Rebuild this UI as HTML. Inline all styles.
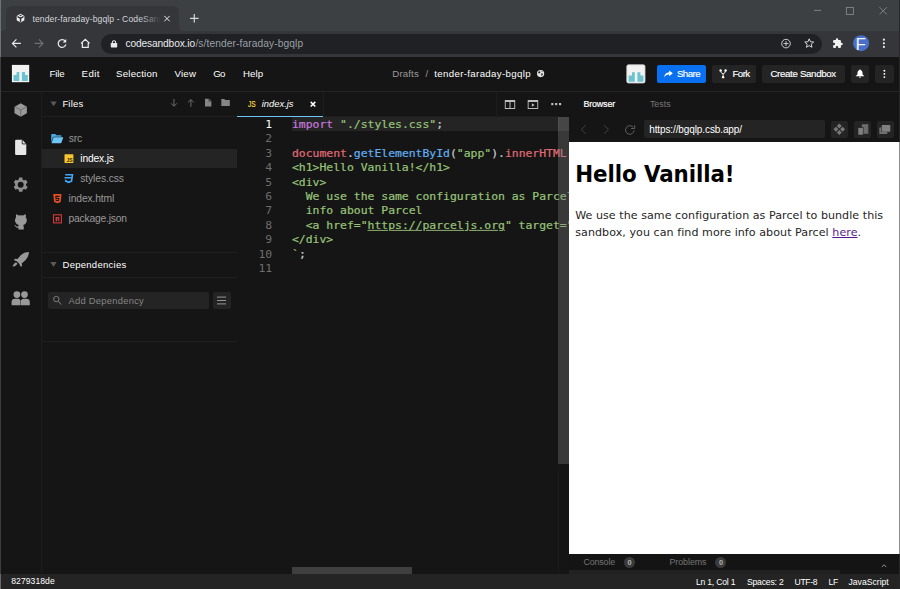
<!DOCTYPE html>
<html lang="en">
<head>
<meta charset="utf-8">
<title>tender-faraday-bgqlp - CodeSandbox</title>
<style>
*{box-sizing:border-box;margin:0;padding:0}
html,body{width:900px;height:589px;overflow:hidden;background:#151515}
body{position:relative;font-family:"Liberation Sans",sans-serif;color:#fff}
.abs{position:absolute}
.t{position:absolute;white-space:nowrap;line-height:1}
svg{position:absolute;overflow:visible}

/* ---------- browser chrome ---------- */
#tabstrip{left:0;top:0;width:900px;height:31px;background:#3c4043}
#topline{left:0;top:0;width:900px;height:1px;background:#2b2d30}
#tab{left:6.3px;top:6px;width:172.5px;height:25px;background:#35363a;border-radius:6px 6px 0 0}
#tabtitle{left:32.4px;top:12px;width:128px;height:14px;overflow:hidden;font-size:8.6px;color:#d3d5d9;white-space:nowrap;line-height:14px;letter-spacing:0.1px}
#tabfade{left:140px;top:12px;width:21px;height:14px;background:linear-gradient(90deg,rgba(53,54,58,0),#35363a)}
#toolbar{left:0;top:31px;width:900px;height:26px;background:#35363a}
#omni{left:101px;top:34px;width:721px;height:19.6px;border-radius:10px;background:#202124}
#avatar{left:853px;top:35.3px;width:16.2px;height:16px;border-radius:50%;background:#486fc9}
#winL{left:0;top:0;width:1px;height:57px;background:#707173}
#winL2{left:0;top:57px;width:1px;height:517px;background:#3e3e3e}
#winL3{left:0;top:574px;width:1px;height:15px;background:#6a6a6a}
#winR{left:899px;top:0;width:1px;height:589px;background:#272727}

/* ---------- csb header ---------- */
#hdr{left:1px;top:57px;width:899px;height:34px;background:#151515}
#hdrline{left:1px;top:91px;width:899px;height:1px;background:#242424}
.btn{top:64.6px;height:18.6px;background:#242424;border-radius:2px}

/* ---------- activity bar / sidebar ---------- */
#actline{left:41px;top:92px;width:1px;height:481px;background:#1e1e1e}
.hline{left:42px;width:195px;height:1px;background:#202020}
#selrow{left:42px;top:149px;width:195px;height:19px;background:#242424}
#dep{left:47.6px;top:292px;width:161.4px;height:16.8px;background:#242424;border-radius:2px}
#depbtn{left:212.8px;top:292px;width:17.8px;height:16.8px;background:#242424;border-radius:2px}

/* ---------- editor ---------- */
#edtabline{left:237px;top:116px;width:86px;height:1px;background:#6cc7f6}
#edtabsep{left:323px;top:92px;width:1px;height:24px;background:#1e1e1e}
#edtabsep2{left:495.8px;top:92px;width:1px;height:24px;background:#1c1c1c}
#curline{left:292px;top:117px;width:266.6px;height:14px;background:#242424}
#curline0{left:323px;top:116px;width:235.6px;height:1px;background:#1d1d1d}
#code{left:237px;top:117px;width:332px;height:170px;overflow:hidden;font-family:"DejaVu Sans Mono","Liberation Mono",monospace;font-size:11.42px}
#code div{position:absolute;white-space:pre;line-height:14.4px;height:14.4px;transform:scaleY(0.9);transform-origin:0 11px}
#code .n{left:0;width:35.2px;text-align:right;color:#6d6d6d}
#code .l{left:55px;-webkit-text-stroke:0.22px currentColor}
.k{color:#c678dd}.s{color:#98c379}.r{color:#e06c75}.f{color:#61afef}.p{color:#c8ccd4}
.u{text-decoration:underline}
#vscroll{left:558.4px;top:116.6px;width:10.2px;height:347.4px;background:rgba(121,121,121,.36)}
#vscroll2{left:558.4px;top:116.6px;width:10.2px;height:14.4px;background:rgba(160,160,160,.13)}
#hscroll{left:291.5px;top:567px;width:120.5px;height:7px;background:#3f3f3f}

/* ---------- preview ---------- */
#urlbox{left:643.6px;top:120.4px;width:181.4px;height:17.6px;background:#242424;border-radius:2px}
.pbtn{top:121px;width:17.4px;height:17px;background:#242424;border-radius:2px}
#page{left:569px;top:142px;width:330px;height:412px;background:#fff}
#pageR{left:899px;top:142px;width:1px;height:412px;background:#8c8c8c}
#conbar{left:569px;top:554px;width:331px;height:16px;background:#141414}
#constrip{left:569px;top:570px;width:271px;height:4px;background:#222}
#edR{left:558.4px;top:465px;width:1px;height:108px;background:#1b1b1b}
.badge{top:556.6px;width:11px;height:11px;border-radius:50%;background:#3a3a3a}

/* ---------- status ---------- */
#status{left:0;top:574px;width:900px;height:15px;background:#242424}
</style>
</head>
<body>
<!-- browser chrome -->
<div class="abs" id="tabstrip"></div>
<div class="abs" id="tab"></div>
<svg style="left:2px;top:26px" width="182" height="5" viewBox="0 0 182 5"><path d="M0 5 Q5 5 5 0 L5 5Z M182 5 Q177 5 177 0 L177 5Z" fill="#35363a"/></svg>
<div class="abs" id="tabtitle">tender-faraday-bgqlp - CodeSandbox</div>
<div class="abs" id="tabfade"></div>
<div class="abs" id="toolbar"></div>
<div class="abs" id="omni"></div>
<svg style="left:853px;top:35px" width="16.2" height="16" viewBox="0 0 16.2 16"><g transform="translate(0.000 0.200)"><ellipse cx="8.100" cy="8" rx="8.100" ry="8" fill="#486fc9"/></g></svg>
<!--ICONS_CHROME_START-->
<!-- favicon cube -->
<svg style="left:16px;top:13px" width="7.7" height="8.9" viewBox="0 0 16 18"><g transform="translate(1.455 1.416)"><path d="M8 0 L16 4.500 V13.500 L8 18 L0 13.500 V4.500 Z" fill="#f1f3f4"/><path d="M8 9.500 V15.400 M8 9.500 L2.800 6.500 M8 9.500 L13.200 6.500" fill="none" stroke="#35363a" stroke-width="3.200" stroke-linecap="round"/><path d="M5 3.600 L8 2 L11 3.600 L8 5.200Z" fill="#35363a"/></g></svg>
<!-- tab close -->
<svg style="left:164px;top:15px" width="6" height="6" viewBox="0 0 6 6"><g transform="translate(0.000 0.600)"><path d="M0.3 0.3 L5.7 5.7 M5.7 0.3 L0.3 5.7" stroke="#e8eaed" stroke-width="1"/></g></svg>
<!-- new tab -->
<svg style="left:190px;top:14px" width="8.6" height="8.6" viewBox="0 0 8.6 8.6"><path d="M4.3 0 V8.6 M0 4.3 H8.6" stroke="#d5d7da" stroke-width="1.2"/></svg>
<!-- window controls -->
<svg style="left:814px;top:7px" width="74" height="8" viewBox="0 0 74 8"><path d="M0 3.4 H7" stroke="#85888c" stroke-width="0.9" fill="none"/><rect x="32.4" y="0.4" width="7" height="7" fill="none" stroke="#85888c" stroke-width="0.9"/><path d="M65.6 0.2 L72.8 7.4 M72.8 0.2 L65.6 7.4" stroke="#85888c" stroke-width="0.9"/></svg>
<!-- back -->
<svg style="left:11px;top:38px" width="9.6" height="9.6" viewBox="0 0 16 16"><g transform="translate(1.000 1.000)"><path d="M15.5 8 H2 M8 1.4 L1.4 8 L8 14.6" fill="none" stroke="#e8eaed" stroke-width="2"/></g></svg>
<!-- forward -->
<svg style="left:34px;top:38px" width="9.6" height="9.6" viewBox="0 0 16 16"><g transform="translate(0.333 1.000)"><path d="M0.5 8 H14 M8 1.4 L14.6 8 L8 14.6" fill="none" stroke="#6e7073" stroke-width="2"/></g></svg>
<!-- reload -->
<svg style="left:57px;top:38px" width="10" height="10" viewBox="0 0 16 16"><g transform="translate(0.000 0.640)"><path d="M13.2 4.6 A6.2 6.2 0 1 0 14.2 9.6" fill="none" stroke="#e8eaed" stroke-width="2"/><path d="M14.8 0.8 V6.6 H9 Z" fill="#e8eaed"/></g></svg>
<!-- home -->
<svg style="left:80px;top:38px" width="9.8" height="9.8" viewBox="0 0 16 16"><g transform="translate(0.653 0.653)"><path d="M1 8.2 L8 1.6 L15 8.2 M3.2 7 V14.6 H12.8 V7" fill="none" stroke="#e8eaed" stroke-width="2" stroke-linejoin="miter"/></g></svg>
<!-- lock -->
<svg style="left:110px;top:40px" width="6.4" height="7.2" viewBox="0 0 10 13" preserveAspectRatio="none"><g transform="translate(1.250 0.361)"><rect x="0" y="5" width="10" height="8" rx="1" fill="#e8eaed"/><path d="M2.4 5.4 V3.6 A2.6 2.6 0 0 1 7.6 3.6 V5.4" fill="none" stroke="#e8eaed" stroke-width="1.6"/></g></svg>
<!-- zoom -->
<svg style="left:781px;top:38px" width="10" height="10" viewBox="0 0 10 10"><g transform="translate(0.000 0.600)"><circle cx="5" cy="5" r="4.3" fill="none" stroke="#d5d7da" stroke-width="0.95"/><path d="M5 2.500 V7.500 M2.500 5 H7.500" stroke="#d5d7da" stroke-width="0.900"/></g></svg>
<!-- star -->
<svg style="left:804px;top:38px" width="10.4" height="10" viewBox="0 0 24 23"><path d="M12 1.8 L14.9 8.6 L22.3 9.3 L16.7 14.2 L18.4 21.4 L12 17.6 L5.6 21.4 L7.3 14.2 L1.7 9.3 L9.1 8.6 Z" fill="none" stroke="#d5d7da" stroke-width="2.3" stroke-linejoin="miter"/></svg>
<!-- extensions puzzle -->
<svg style="left:832px;top:37px" width="11" height="11" viewBox="0 0 24 24"><g transform="translate(0.436 1.745)"><path d="M20.5 11H19V7a2 2 0 0 0-2-2h-4V3.5a2.5 2.5 0 0 0-5 0V5H4a2 2 0 0 0-2 2v3.8h1.5a2.7 2.7 0 0 1 0 5.400H2V20a2 2 0 0 0 2 2h3.800v-1.500a2.700 2.700 0 0 1 5.400 0V22H17a2 2 0 0 0 2-2v-4h1.500a2.500 2.500 0 0 0 0-5z" fill="#f1f3f4"/></g></svg>
<!-- menu dots -->
<svg style="left:882px;top:38px" width="2.6" height="10.2" viewBox="0 0 2.6 10.2"><g transform="translate(0.600 0.500)"><circle cx="1.3" cy="1.2" r="1.1" fill="#e8eaed"/><circle cx="1.3" cy="4.8" r="1.1" fill="#e8eaed"/><circle cx="1.3" cy="8.4" r="1.1" fill="#e8eaed"/></g></svg>
<!--ICONS_CHROME_END-->

<!-- codesandbox header -->
<div class="abs" id="hdr"></div>
<div class="abs" id="hdrline"></div>
<div class="abs btn" style="left:657px;width:49px;background:#0971f1"></div>
<div class="abs btn" style="left:712px;width:44px"></div>
<div class="abs btn" style="left:761.6px;width:83.4px"></div>
<div class="abs btn" style="left:851px;width:18px"></div>
<div class="abs btn" style="left:875px;width:19px"></div>
<!--ICONS_HDR_START-->
<!-- csb logo / workspace avatar -->
<svg style="left:11px;top:64px" width="17.3" height="17.3" viewBox="0 0 17.3 17.3"><g transform="translate(0.900 0.900)"><rect width="17.3" height="17.3" fill="#f2f2f2"/><path d="M1.6 16 V10.2 H4.7 V7.2 H7.4 V16 Z M10 16 V7.2 H13.1 V10.2 H15.9 V16 Z" fill="#6cc3cf"/></g></svg>
<!-- globe -->
<svg style="left:537px;top:70px" width="7.2" height="7.2" viewBox="0 0 14 14"><circle cx="7" cy="7" r="7" fill="#e6e6e6"/><path d="M3 3.200 Q5 2 6.500 3.200 Q7 5 5.200 5.600 Q4.500 7.500 3 6.500 Q2 5 3 3.200Z M8.500 6.500 Q11 6 11.500 8 Q11 10.500 9 11.500 Q8 10 8.500 8.500Z M8.600 2 Q10.500 2.200 11.200 3.800 Q9.500 4.200 8.600 2Z" fill="#151515"/></svg>
<!-- user avatar -->
<svg style="left:626px;top:64px" width="19" height="19" viewBox="0 0 19 19"><g transform="translate(0.400 0.400)"><rect x="0.4" y="0.4" width="18.2" height="18.2" rx="1.6" fill="#f2f2f2" stroke="#cfcfcf" stroke-width="0.8"/><path d="M2.200 17.300 V11 H5.600 V7.800 H8.400 V17.300 Z M11 17.300 V7.800 H14 V11 H17 V17.300 Z" fill="#6cc3cf"/></g></svg>
<!-- share arrow -->
<svg style="left:664px;top:70px" width="8.8" height="7.2" viewBox="0 0 22 18"><g transform="translate(0.000 1.000)"><path d="M13 0 L22 7.200 L13 14.400 V10 Q5 9.500 0 18 Q1.500 5.500 13 4.600 Z" fill="#fff"/></g></svg>
<!-- fork -->
<svg style="left:719px;top:69px" width="7.4" height="9.2" viewBox="0 0 15 18.5"><g transform="translate(0.811 0.402)"><path d="M2.400 2.400 Q2.800 8.500 7.500 9.500 Q12.200 8.500 12.600 2.400 M7.500 9.500 V16" fill="none" stroke="#fff" stroke-width="1.900"/><circle cx="2.400" cy="2.400" r="2.400" fill="#fff"/><circle cx="12.600" cy="2.400" r="2.400" fill="#fff"/><circle cx="7.500" cy="16.100" r="2.400" fill="#fff"/></g></svg>
<!-- bell -->
<svg style="left:855px;top:69px" width="8.8" height="8.6" viewBox="0 0 18 17.5"><g transform="translate(1.227 0.610)"><path d="M9 0 Q10.200 0 10.200 1.300 Q14.200 2.400 14.200 7 V10.500 L17.600 13.600 V14.400 H0.400 V13.600 L3.800 10.500 V7 Q3.800 2.400 7.800 1.300 Q7.800 0 9 0Z M6.800 15.400 H11.200 Q10.800 17.400 9 17.400 Q7.200 17.400 6.800 15.400Z" fill="#fff"/></g></svg>
<!-- header dots -->
<svg style="left:883px;top:69px" width="2.2" height="8.8" viewBox="0 0 2.2 8.8"><g transform="translate(0.300 0.600)"><circle cx="1.100" cy="1.100" r="0.950" fill="#fff"/><circle cx="1.100" cy="4.300" r="0.950" fill="#fff"/><circle cx="1.100" cy="7.500" r="0.950" fill="#fff"/></g></svg>
<!--ICONS_HDR_END-->

<!-- activity bar + sidebar -->
<div class="abs" id="actline"></div>
<div class="abs hline" style="top:116px"></div>
<div class="abs hline" style="top:252px"></div>
<div class="abs hline" style="top:277px"></div>
<div class="abs hline" style="top:341px"></div>
<div class="abs" id="selrow"></div>
<div class="abs" id="dep"></div>
<div class="abs" id="depbtn"></div>
<!--ICONS_SIDE_START-->
<!-- activity: cube -->
<svg style="left:14px;top:103px" width="12.4" height="13.4" viewBox="0 0 24 26"><g transform="translate(0.968 0.582)"><path d="M12 0 L24 6.500 V19.500 L12 26 L0 19.500 V6.500 Z" fill="#999"/><path d="M0.800 7 L12 13 L23.200 7 M12 13 V25.400" fill="none" stroke="#5e5e5e" stroke-width="1.400"/></g></svg>
<!-- activity: file (active) -->
<svg style="left:15px;top:139px" width="11.2" height="15.4" viewBox="0 0 22 30"><g transform="translate(0.196 1.558)"><path d="M2 0 H14 L22 8 V28 Q22 30 20 30 H2 Q0 30 0 28 V2 Q0 0 2 0Z" fill="#e6e6e6"/><path d="M14 0 V8 H22" fill="none" stroke="#151515" stroke-width="1.600"/></g></svg>
<!-- activity: gear -->
<svg style="left:13px;top:177px" width="15" height="15" viewBox="0 0 24 24"><g transform="translate(0.320 0.320)"><path d="M19.430 12.980c.04-.32.070-.64.070-.98s-.030-.66-.070-.98l2.110-1.650c.19-.15.240-.42.120-.64l-2-3.460c-.12-.22-.39-.3-.61-.22l-2.490 1c-.52-.4-1.080-.73-1.690-.98l-.38-2.650A.488.488 0 0 0 14 2h-4c-.25 0-.46.180-.49.420l-.38 2.650c-.61.250-1.170.59-1.690.98l-2.490-1c-.23-.09-.49 0-.61.220l-2 3.460c-.13.220-.07.490.12.640l2.110 1.650c-.4.320-.7.650-.7.980s.3.660.7.980l-2.110 1.650c-.19.150-.24.420-.12.640l2 3.460c.12.220.39.300.61.220l2.490-1c.52.400 1.080.730 1.690.98l.38 2.650c.3.240.24.420.49.420h4c.25 0 .46-.18.490-.42l.38-2.650c.61-.25 1.170-.59 1.690-.98l2.490 1c.23.090.49 0 .61-.22l2-3.460c.12-.22.070-.49-.12-.64l-2.110-1.650zM12 16.200a4.200 4.200 0 1 1 0-8.400 4.200 4.200 0 0 1 0 8.400z" fill="#8e8e8e" transform="translate(-1.600 -1.600) scale(1.133)"/></g></svg>
<!-- activity: github -->
<svg style="left:14px;top:213px" width="13.8" height="16.4" viewBox="0 0 28 33"><g transform="translate(0.000 0.805)"><path d="M4.500 1.500 Q7.500 2 9.500 4 Q14 3 18.500 4 Q20.500 2 23.500 1.500 Q24.800 5 23.800 7.500 Q26.500 10.500 26 15 Q25 22 18.500 23.500 Q19.800 25 19.800 27.500 V32.500 H9 V29 Q4.500 30 3 26.500 Q2.200 24.500 0.500 23.800 Q1.800 22.800 3.500 24.200 Q5.500 27.500 9 26.200 Q9.200 24.500 10 23.500 Q3 22 2 15 Q1.500 10.500 4.200 7.500 Q3.200 5 4.500 1.500Z" fill="#999"/></g></svg>
<!-- activity: rocket -->
<svg style="left:12px;top:251px" width="16.8" height="15.6" viewBox="0 0 34 31"><g transform="translate(0.607 1.192)"><path d="M33.500 0.500 Q34 9 27 16.500 L19 24 L20 29 L17 30.500 L14 24.500 L9 19.500 L3.500 17 L5 14 L10.500 14.500 L17.500 6.500 Q24.500 0 33.500 0.500Z" fill="#999"/><path d="M7.500 21.500 L10.500 24.500 Q7 30 0.500 30.500 Q1.500 24.500 7.500 21.500Z" fill="#999"/></g></svg>
<!-- activity: people -->
<svg style="left:11px;top:291px" width="18.2" height="14.2" viewBox="0 0 36 28"><g transform="translate(1.187 0.000)"><circle cx="10.500" cy="7" r="6.600" fill="#999"/><circle cx="25.500" cy="7" r="6.600" fill="#999"/><path d="M0 28 V22 Q0 15.500 7 15.500 H13 Q17 15.500 17.600 19.500 V28Z" fill="#999"/><path d="M18.400 28 V21 Q18.400 15.500 24 15.500 H29 Q36 15.500 36 22 V28Z" fill="#999"/></g></svg>

<!-- sidebar: collapse triangles -->
<svg style="left:50px;top:101px" width="6.4" height="4.8" viewBox="0 0 5.8 4.4"><g transform="translate(0.362 0.458)"><path d="M0 0 H5.800 L2.900 4.400Z" fill="#5a5a5a"/></g></svg>
<svg style="left:50px;top:262px" width="6.4" height="4.8" viewBox="0 0 5.8 4.4"><g transform="translate(0.272 0.092)"><path d="M0 0 H5.800 L2.900 4.400Z" fill="#5a5a5a"/></g></svg>
<!-- sidebar header actions -->
<svg style="left:170px;top:99px" width="6.4" height="7.8" viewBox="0 0 6.4 7.8"><g transform="translate(0.800 0.000)"><path d="M3.200 0 V7.200 M0.300 4.300 L3.200 7.200 L6.100 4.300" fill="none" stroke="#757575" stroke-width="0.900"/></g></svg>
<svg style="left:187px;top:99px" width="6.4" height="7.8" viewBox="0 0 6.4 7.8"><g transform="translate(0.700 0.000)"><path d="M3.200 7.800 V0.600 M0.300 3.500 L3.200 0.600 L6.100 3.500" fill="none" stroke="#757575" stroke-width="0.900"/></g></svg>
<svg style="left:205px;top:98px" width="6.4" height="7.7" viewBox="0 0 12.8 15.4"><g transform="translate(0.000 1.400)"><path d="M0 0 H8 L12.800 4.800 V15.400 H0Z" fill="#858585"/><path d="M8 0 V4.800 H12.800" fill="none" stroke="#151515" stroke-width="1.200"/></g></svg>
<svg style="left:221px;top:99px" width="8.5" height="6.9" viewBox="0 0 18.4 13.8" preserveAspectRatio="none"><g transform="translate(0.649 0.000)"><path d="M0 0 H6.500 L8.500 2 H18.400 V13.800 H0Z" fill="#858585"/></g></svg>
<!-- folder open -->
<svg style="left:51px;top:134px" width="12" height="9.2" viewBox="0 0 24 18.4"><g transform="translate(0.400 0.000)"><path d="M0 1.500 Q0 0 1.500 0 H8 L10.500 2.600 H19 Q20.500 2.600 20.500 4 V5.600 H5.500 Q4 5.600 3.500 7 L0 16.500Z" fill="#4aa8e0"/><path d="M5.800 6.600 H23 Q24.300 6.600 23.800 8 L20.500 17.200 Q20.100 18.400 18.800 18.400 H1.200 Q0.400 18.400 0.800 17.400 L4.200 7.800 Q4.600 6.600 5.800 6.600Z" fill="#6cc7f6"/></g></svg>
<!-- js file icon -->
<svg style="left:64px;top:154px" width="8.9" height="8.9" viewBox="0 0 18 18"><g transform="translate(1.011 0.404)"><rect width="18" height="18" rx="1" fill="#f8c630"/><text x="16.600" y="15.800" text-anchor="end" font-family="Liberation Sans,sans-serif" font-weight="bold" font-size="10.400" fill="#3a2e00">JS</text></g></svg>
<!-- css file icon -->
<svg style="left:64px;top:174px" width="9" height="9.2" viewBox="0 0 18 18.4"><g transform="translate(0.800 0.000)"><path d="M1.500 0 H18 L15.800 15.400 L8.500 18.400 L1.200 15.400 L0.700 11.400 H4.200 L4.400 13 L8.500 14.700 L12.800 13 L13.400 9 H0.300 L0 6 H13.900 L14.300 3 H1.800Z" fill="#42a5f5"/></g></svg>
<!-- html5 file icon -->
<svg style="left:53px;top:194px" width="8.2" height="9.2" viewBox="0 0 16.4 18.4"><g transform="translate(0.600 0.000)"><path d="M0 0 H16.400 L14.900 16.200 L8.200 18.400 L1.500 16.200Z" fill="#e44f26"/><path d="M4 3.600 H12.600 L12.400 5.800 H6.300 L6.500 7.800 H12.200 L11.700 13.300 L8.200 14.400 L4.700 13.300 L4.500 10.800 H6.600 L6.700 11.800 L8.200 12.200 L9.700 11.800 L9.900 9.900 H4.500Z" fill="#151515"/></g></svg>
<!-- npm icon -->
<svg style="left:53px;top:214px" width="8.9" height="9.1" viewBox="0 0 17.8 18.2"><g transform="translate(0.000 0.600)"><rect x="1" y="1" width="15.800" height="16.200" fill="none" stroke="#d13b3b" stroke-width="2.200"/><path d="M5.200 14 V5.400 H12.600 V14 H10.200 V7.800 H8.600 V14Z" fill="#d13b3b"/></g></svg>
<!-- search icon -->
<svg style="left:53px;top:295px" width="8.6" height="9.2" viewBox="0 0 17.2 18.4"><g transform="translate(0.000 1.600)"><circle cx="6.600" cy="6.600" r="5.400" fill="none" stroke="#8a8a8a" stroke-width="1.700"/><path d="M10.600 10.800 L16.400 17.600" stroke="#8a8a8a" stroke-width="1.900"/></g></svg>
<!-- hamburger -->
<svg style="left:217px;top:296px" width="9" height="8" viewBox="0 0 9 8"><g transform="translate(0.000 0.500)"><path d="M0 0.600 H9 M0 4 H9 M0 7.400 H9" stroke="#9c9c9c" stroke-width="0.950"/></g></svg>
<!--ICONS_SIDE_END-->

<!-- editor -->
<div class="abs" id="edtabsep"></div>
<div class="abs" id="edtabsep2"></div>
<div class="abs" id="edtabline"></div>
<div class="abs" id="curline"></div>
<div class="abs" id="curline0"></div>
<div class="abs" id="code">
<div class="n" style="top:0px;color:#fff">1</div><div class="l" style="top:0px"><span class="k">import</span> <span class="s">"./styles.css"</span><span class="p">;</span></div>
<div class="n" style="top:14.4px">2</div>
<div class="n" style="top:28.8px">3</div><div class="l" style="top:28.8px"><span class="r">document</span><span class="p">.</span><span class="f">getElementById</span><span class="p">(</span><span class="s">"app"</span><span class="p">).</span><span class="r">innerHTML</span><span class="p"> = </span><span class="s">`</span></div>
<div class="n" style="top:43.2px">4</div><div class="l s" style="top:43.2px">&lt;h1&gt;Hello Vanilla!&lt;/h1&gt;</div>
<div class="n" style="top:57.6px">5</div><div class="l s" style="top:57.6px">&lt;div&gt;</div>
<div class="n" style="top:72px">6</div><div class="l s" style="top:72px">  We use the same configuration as Parcel to bundle this sandbox, you can find more</div>
<div class="n" style="top:86.4px">7</div><div class="l s" style="top:86.4px">  info about Parcel</div>
<div class="n" style="top:100.8px">8</div><div class="l s" style="top:100.8px">  &lt;a hre<span>f</span>="<span class="u">https://parceljs.org</span>" target="_blank" rel="noopener noreferrer"&gt;here&lt;/a&gt;.</div>
<div class="n" style="top:115.2px">9</div><div class="l s" style="top:115.2px">&lt;/div&gt;</div>
<div class="n" style="top:129.6px">10</div><div class="l" style="top:129.6px"><span class="s">`</span><span class="p">;</span></div>
<div class="n" style="top:144px">11</div>
</div>
<div class="abs" id="vscroll"></div>
<div class="abs" id="vscroll2"></div>
<div class="abs" id="hscroll"></div>
<div class="abs" id="edR"></div>
<!--ICONS_ED_START-->
<!-- editor tab close -->
<svg style="left:310px;top:101px" width="5.6" height="5.6" viewBox="0 0 5.6 5.6"><g transform="translate(0.200 0.400)"><path d="M0.500 0.500 L5.100 5.100 M5.100 0.500 L0.500 5.100" stroke="#fff" stroke-width="1.500"/></g></svg>
<!-- split editor -->
<svg style="left:504px;top:100px" width="10.4" height="9" viewBox="0 0 10.4 9"><g transform="translate(0.800 0.000)"><path d="M0 0 H10.400 V9 H0Z M0.900 2 V8.100 H4.700 V2Z M5.700 2 V8.100 H9.500 V2Z" fill="#bdbdbd" fill-rule="evenodd"/></g></svg>
<!-- open preview -->
<svg style="left:527px;top:100px" width="10.5" height="9" viewBox="0 0 10.5 9"><g transform="translate(0.700 0.000)"><path d="M0 0 H10.500 V9 H0Z M0.900 2 V8.100 H9.600 V2Z" fill="#bdbdbd" fill-rule="evenodd"/><path d="M4.200 3.300 L6.900 5 L4.200 6.700Z" fill="#bdbdbd"/></g></svg>
<!-- more dots -->
<svg style="left:551px;top:103px" width="10" height="2.2" viewBox="0 0 10 2.2"><g transform="translate(0.200 0.000)"><rect x="0" y="0" width="2.200" height="2.200" fill="#bdbdbd"/><rect x="3.900" y="0" width="2.200" height="2.200" fill="#bdbdbd"/><rect x="7.800" y="0" width="2.200" height="2.200" fill="#bdbdbd"/></g></svg>
<!--ICONS_ED_END-->

<!-- preview -->
<div class="abs" id="urlbox"></div>
<div class="abs pbtn" style="left:831px"></div>
<div class="abs pbtn" style="left:854px"></div>
<div class="abs pbtn" style="left:877px"></div>
<div class="abs" id="page"></div>
<div class="abs" id="conbar"></div>
<div class="abs" id="constrip"></div>
<div class="abs badge" style="left:624px"></div>
<div class="abs badge" style="left:715.4px"></div>
<!--ICONS_PV_START-->
<!-- nav back / forward (disabled) -->
<svg style="left:580px;top:125px" width="5.2" height="9" viewBox="0 0 5.2 9"><g transform="translate(0.800 0.000)"><path d="M4.900 0.300 L0.500 4.500 L4.900 8.700" fill="none" stroke="#4d4d4d" stroke-width="0.800"/></g></svg>
<svg style="left:603px;top:125px" width="5.2" height="9" viewBox="0 0 5.2 9"><g transform="translate(0.800 0.000)"><path d="M0.300 0.300 L4.700 4.500 L0.300 8.700" fill="none" stroke="#4d4d4d" stroke-width="0.800"/></g></svg>
<!-- refresh -->
<svg style="left:624px;top:124px" width="10.4" height="9.6" viewBox="0 0 10.4 9.6"><g transform="translate(0.800 0.800)"><path d="M8.300 2.400 A4.300 4.300 0 1 0 9.300 5.600" fill="none" stroke="#6e6e6e" stroke-width="0.850"/><path d="M9.900 0.300 V3.700 H6.300" fill="none" stroke="#6e6e6e" stroke-width="0.850"/></g></svg>
<!-- preview action icons -->
<svg style="left:833px;top:123px" width="11.6" height="11.6" viewBox="0 0 11.6 11.6"><g transform="translate(0.500 0.500)"><path d="M5.800 0 L8.300 2.500 L5.800 5 L3.300 2.500Z M5.800 6.600 L8.300 9.100 L5.800 11.600 L3.300 9.100Z M2.500 3.300 L5 5.800 L2.500 8.300 L0 5.800Z M9.100 3.300 L11.600 5.800 L9.100 8.300 L6.600 5.800Z" fill="#787878"/></g></svg>
<svg style="left:858px;top:124px" width="10.3" height="10.8" viewBox="0 0 10.3 10.8"><g transform="translate(0.000 0.200)"><rect x="3.800" y="0" width="6.500" height="9.600" fill="#6c6c6c"/><rect x="0" y="3.500" width="5.200" height="7.300" fill="#808080" stroke="#242424" stroke-width="0.600"/></g></svg>
<svg style="left:879px;top:125px" width="11" height="8.9" viewBox="0 0 11 8.9"><g transform="translate(0.300 0.100)"><rect x="0" y="2.300" width="8" height="6.600" rx="0.600" fill="#707070"/><rect x="1.900" y="-0.400" width="9.500" height="7.400" rx="0.600" fill="#242424"/><rect x="2.400" y="0" width="8.600" height="6.600" rx="0.600" fill="#808080"/></g></svg>
<!-- console chevron -->
<svg style="left:881px;top:564px" width="5" height="3.4" viewBox="0 0 5 3.4"><g transform="translate(0.600 0.000)"><path d="M0.300 3.100 L2.500 0.700 L4.700 3.100" fill="none" stroke="#9a9a9a" stroke-width="0.900"/></g></svg>
<!--ICONS_PV_END-->

<!-- status bar -->
<div class="abs" id="status"></div>

<div class="t" style="left:125.6px;top:39px;font-size:10.2px;color:#e8eaed;letter-spacing:-0.144px;">codesandbox.io</div>
<div class="t" style="left:195.4px;top:39px;font-size:10.2px;color:#9aa0a6;letter-spacing:0.107px;">/s/tender-faraday-bgqlp</div>
<div class="t" style="left:855.5px;top:36px;font-size:17px;color:#f3f5fc;">F</div>
<div class="t" style="left:49.4px;top:69px;font-size:9.7px;color:#ffffff;letter-spacing:-0.111px;">File</div>
<div class="t" style="left:81.6px;top:69px;font-size:9.7px;color:#ffffff;letter-spacing:0.396px;">Edit</div>
<div class="t" style="left:116.1px;top:69px;font-size:9.7px;color:#ffffff;letter-spacing:0.179px;">Selection</div>
<div class="t" style="left:174.4px;top:69px;font-size:9.7px;color:#ffffff;letter-spacing:0.254px;">View</div>
<div class="t" style="left:213.2px;top:69px;font-size:9.7px;color:#ffffff;letter-spacing:-0.646px;">Go</div>
<div class="t" style="left:242.9px;top:69px;font-size:9.7px;color:#ffffff;letter-spacing:0.118px;">Help</div>
<div class="t" style="left:392.3px;top:69px;font-size:9.7px;color:#999999;letter-spacing:0.129px;">Drafts</div>
<div class="t" style="left:425.6px;top:69px;font-size:9.7px;color:#999999;">/</div>
<div class="t" style="left:434.3px;top:69px;font-size:9.7px;color:#ffffff;letter-spacing:0.334px;">tender-faraday-bgqlp</div>
<div class="t" style="left:676.9px;top:69px;font-size:9.7px;color:#ffffff;letter-spacing:-0.542px;-webkit-text-stroke:0.15px currentColor;">Share</div>
<div class="t" style="left:732.5px;top:69px;font-size:9.7px;color:#ffffff;letter-spacing:-0.561px;-webkit-text-stroke:0.15px currentColor;">Fork</div>
<div class="t" style="left:770.4px;top:69px;font-size:9.7px;color:#ffffff;letter-spacing:-0.325px;-webkit-text-stroke:0.15px currentColor;">Create Sandbox</div>
<div class="t" style="left:62.4px;top:99px;font-size:9.5px;color:#ffffff;letter-spacing:0.181px;">Files</div>
<div class="t" style="left:68.8px;top:134px;font-size:10.3px;color:#999999;letter-spacing:-0.213px;">src</div>
<div class="t" style="left:80.3px;top:154px;font-size:10.3px;color:#ffffff;letter-spacing:-0.188px;">index.js</div>
<div class="t" style="left:80.3px;top:174px;font-size:10.3px;color:#999999;letter-spacing:-0.115px;">styles.css</div>
<div class="t" style="left:68.6px;top:194px;font-size:10.3px;color:#999999;letter-spacing:-0.136px;">index.html</div>
<div class="t" style="left:68.5px;top:214px;font-size:10.3px;color:#999999;letter-spacing:-0.198px;">package.json</div>
<div class="t" style="left:62.5px;top:260px;font-size:9.5px;color:#ffffff;letter-spacing:0.267px;">Dependencies</div>
<div class="t" style="left:68.5px;top:296px;font-size:9.4px;color:#858585;letter-spacing:0.257px;">Add Dependency</div>
<div class="t" style="left:248.1px;top:102px;font-size:6.6px;color:#ecd63e;transform:scaleY(1.25);transform-origin:0 5px;letter-spacing:-0.105px;-webkit-text-stroke:0.15px currentColor;">JS</div>
<div class="t" style="left:261.7px;top:99px;font-size:9.4px;color:#ffffff;letter-spacing:0.012px;font-style:italic;">index.js</div>
<div class="t" style="left:583.5px;top:100px;font-size:8.9px;color:#ffffff;letter-spacing:-0.149px;-webkit-text-stroke:0.2px currentColor;">Browser</div>
<div class="t" style="left:649.9px;top:100px;font-size:8.9px;color:#757575;letter-spacing:0.037px;">Tests</div>
<div class="t" style="left:649.2px;top:125px;font-size:10px;color:#ffffff;letter-spacing:-0.104px;">https://bgqlp.csb.app/</div>
<div class="t" style="left:575.3px;top:164px;font-size:21.4px;color:#000;font-family:'DejaVu Sans','Liberation Sans',sans-serif;transform:scaleY(1.1);transform-origin:0 18px;letter-spacing:-0.093px;font-weight:bold;">Hello Vanilla!</div>
<div class="t" style="left:575.2px;top:210px;font-size:11.1px;color:#262626;font-family:'DejaVu Sans','Liberation Sans',sans-serif;letter-spacing:0.039px;">We use the same configuration as Parcel to bundle this</div>
<div class="t" style="left:575.2px;top:227px;font-size:11.1px;color:#262626;font-family:'DejaVu Sans','Liberation Sans',sans-serif;letter-spacing:0.055px;">sandbox, you can find more info about Parcel <span style="color:#551a8b;text-decoration:underline">here</span>.</div>
<div class="t" style="left:583.5px;top:558px;font-size:8.9px;color:#757575;letter-spacing:-0.149px;">Console</div>
<div class="t" style="left:669.5px;top:558px;font-size:8.9px;color:#757575;letter-spacing:-0.062px;">Problems</div>
<div class="t" style="left:627.5px;top:559px;font-size:7.4px;color:#b4b4b4;font-weight:bold;">0</div>
<div class="t" style="left:718.9px;top:559px;font-size:7.4px;color:#b4b4b4;font-weight:bold;">0</div>
<div class="t" style="left:11.2px;top:577px;font-size:8.6px;color:#ffffff;letter-spacing:0.068px;">8279318de</div>
<div class="t" style="left:695.9px;top:578px;font-size:8.6px;color:#ffffff;letter-spacing:-0.192px;">Ln 1, Col 1</div>
<div class="t" style="left:746.9px;top:578px;font-size:8.6px;color:#ffffff;letter-spacing:-0.170px;">Spaces: 2</div>
<div class="t" style="left:794.5px;top:578px;font-size:8.6px;color:#ffffff;letter-spacing:-0.325px;">UTF-8</div>
<div class="t" style="left:828.5px;top:578px;font-size:8.6px;color:#ffffff;letter-spacing:-0.373px;">LF</div>
<div class="t" style="left:848.5px;top:578px;font-size:8.6px;color:#ffffff;letter-spacing:0.015px;">JavaScript</div>

<div class="abs" id="winL"></div>
<div class="abs" id="winL2"></div>
<div class="abs" id="winL3"></div>
<div class="abs" id="winR"></div>
<div class="abs" id="pageR"></div>
</body>
</html>
